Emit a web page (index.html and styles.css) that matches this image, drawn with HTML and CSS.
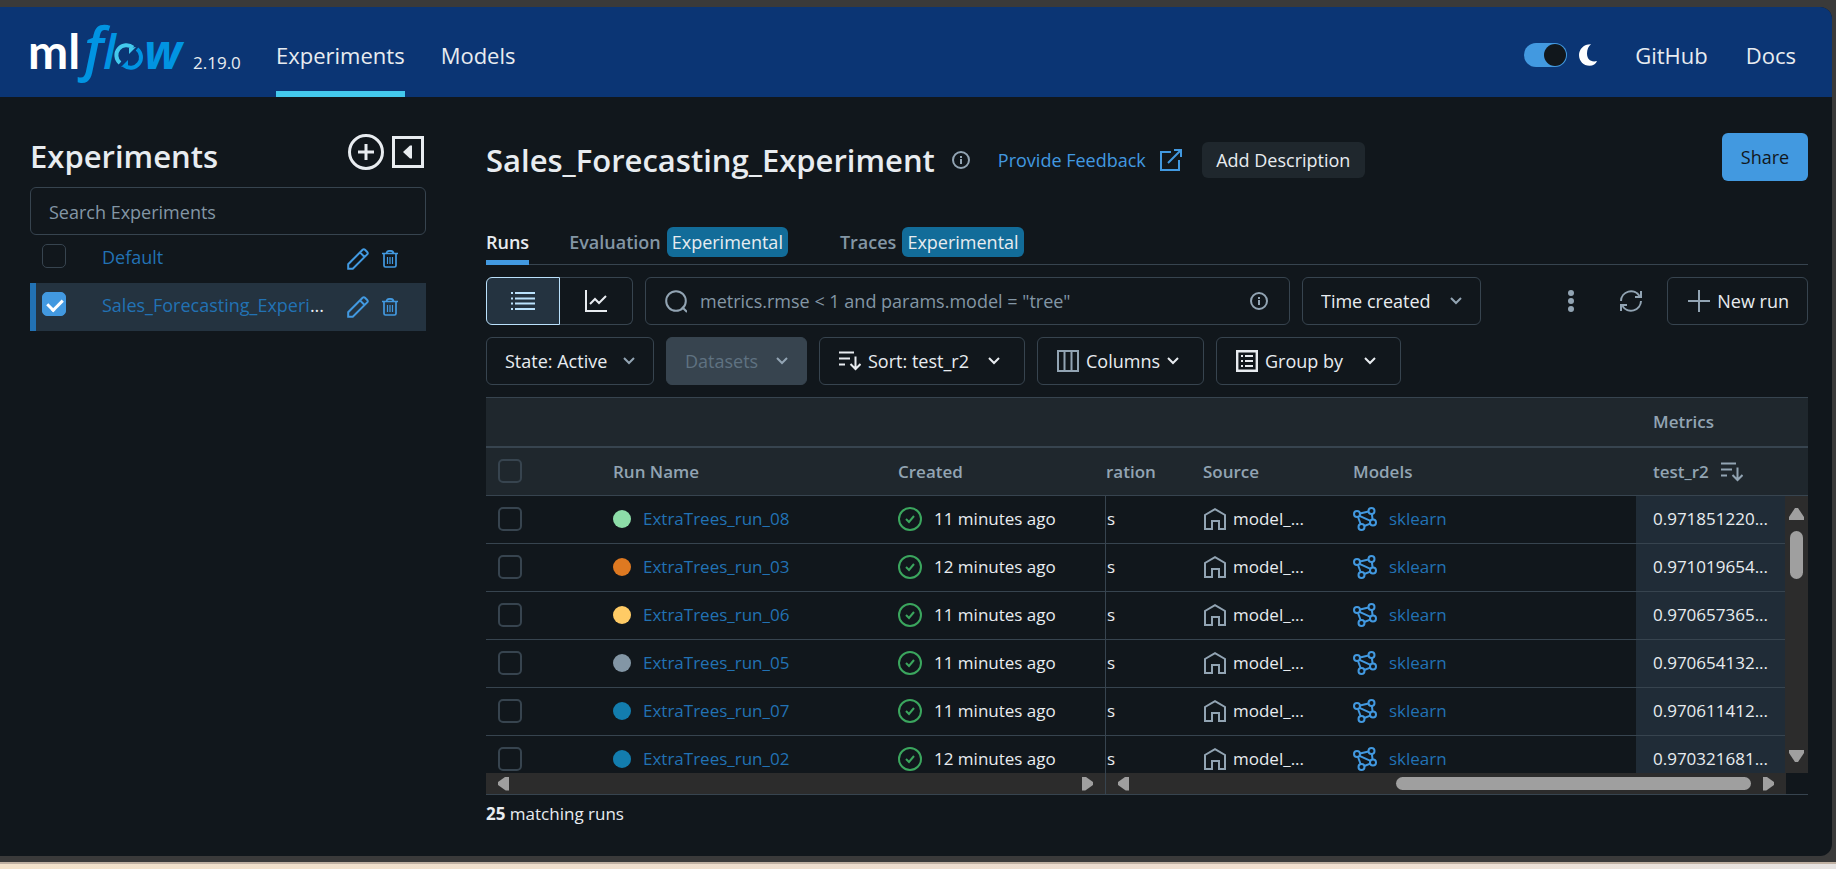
FILE: index.html
```html
<!DOCTYPE html>
<html lang="en">
<head>
<meta charset="utf-8">
<title>MLflow</title>
<link rel="stylesheet" href="styles.css">
</head>
<body>
<svg class="defs" aria-hidden="true">
  <symbol id="i-chevron" viewBox="0 0 12 8"><path d="M1 1l5 5 5-5" fill="none" stroke="currentColor" stroke-width="2"/></symbol>
  <symbol id="i-info" viewBox="0 0 18 18"><circle cx="9" cy="9" r="8" fill="none" stroke="currentColor" stroke-width="2"/><path d="M8 8h2v5H8zM8 5h2v2H8z" fill="currentColor"/></symbol>
  <symbol id="i-pencil" viewBox="0 0 22 22"><path d="M1.200 20.800v-4.600L15.600 1.800q1.200-1.200 2.400 0l2.200 2.200q1.200 1.200 0 2.400L5.800 20.800zM13 4.400l4.600 4.600" fill="none" stroke="currentColor" stroke-width="2"/></symbol>
  <symbol id="i-trash" viewBox="0 0 16 18"><path d="M0 3.500h16M4.500 3.500q0-2.700 3.500-2.700t3.500 2.700M2 4v11.500q0 1.500 1.500 1.500h9q1.500 0 1.500-1.500V4" fill="none" stroke="currentColor" stroke-width="1.700"/><path d="M5.500 7v7M8 7v7M10.500 7v7" stroke="currentColor" stroke-width="1.200"/></symbol>
  <symbol id="i-sort" viewBox="0 0 22 20"><path d="M0 1.500h15M0 7.500h11M0 13.500h6" fill="none" stroke="currentColor" stroke-width="2"/><path d="M16.500 5.500v12M11.500 13l5 5 5-5" fill="none" stroke="currentColor" stroke-width="2"/></symbol>
  <symbol id="i-check" viewBox="0 0 24 24"><circle cx="12" cy="12" r="11" fill="none" stroke="currentColor" stroke-width="2"/><path d="M8 12l3 3 5-6" fill="none" stroke="currentColor" stroke-width="2"/></symbol>
  <symbol id="i-home" viewBox="0 0 22 22"><path d="M1 21V7l10-5.800L21 7v14h-6v-8H8v8z" fill="none" stroke="currentColor" stroke-width="2"/></symbol>
  <symbol id="i-model" viewBox="0 0 24 24"><g fill="none" stroke="currentColor" stroke-width="2"><circle cx="4" cy="7" r="3"/><circle cx="18.500" cy="4" r="3"/><circle cx="20" cy="15.500" r="3"/><circle cx="8.500" cy="20" r="3"/><path d="M7 6.400l8.500-1.800M18.900 7l.7 5.500M11.300 19l6-2.400M5 10l2.600 7M6.500 8.800l11 5"/></g></symbol>
</svg>

<div class="app">
  <header class="topbar">
    <a class="logo" href="#" aria-label="mlflow">
      <svg width="160" height="90" viewBox="-4 0 160 90">
        <text class="logo-ml" x="-1" y="62">ml</text>
        <text class="logo-flow f" x="55" y="62">f</text>
        <text class="logo-flow l" x="74" y="62">l</text>
        <text class="logo-flow w" x="115" y="62">w</text>
        <g fill="none" stroke-width="4">
          <path d="M91 56a10 10 0 0 1 13-15.500" stroke="#43c9ed"/>
          <path d="M108 42a10 10 0 0 1-13 16.500" stroke="#0194e2"/>
        </g>
        <path d="M100 47v-6l7-1z" fill="#43c9ed"/>
        <path d="M99 53v6l-7 1z" fill="#0194e2"/>
      </svg>
    </a>
    <span class="version">2.19.0</span>
    <nav class="nav">
      <a class="nav-link active" href="#">Experiments</a>
      <a class="nav-link" href="#">Models</a>
    </nav>
    <div class="top-right">
      <label class="theme">
        <input type="checkbox" class="switch" aria-label="Dark mode" checked>
        <svg width="18" height="22" viewBox="0 0 18 22"><path d="M12 .2C5 0 0 5 0 11s4.500 10.800 10.500 10.800c3.500 0 6.500-1.600 7.500-4.800C12 18.500 8 15.500 8 9.500 8 5.500 9.500 2 12 .2z" fill="#fff"/></svg>
      </label>
      <a class="nav-link" href="#">GitHub</a>
      <a class="nav-link" href="#">Docs</a>
    </div>
  </header>

  <div class="layout">
    <aside class="sidebar">
      <div class="side-head">
        <h1 class="heading">Experiments</h1>
        <button class="icon-btn" aria-label="New experiment"><svg width="36" height="36" viewBox="0 0 36 36"><circle cx="18" cy="18" r="16.500" fill="none" stroke="currentColor" stroke-width="3"/><path d="M18 10v16M10 18h16" stroke="currentColor" stroke-width="3"/></svg></button>
        <button class="icon-btn" aria-label="Hide list"><svg width="32" height="32" viewBox="0 0 32 32"><path d="M1.500 1.500h29v29h-29z" fill="none" stroke="currentColor" stroke-width="3"/><path d="M20 9.500v13h-2L11 16l7-6.500z" fill="currentColor"/></svg></button>
      </div>
      <input class="search-exp" type="text" placeholder="Search Experiments" aria-label="Search Experiments">
      <ul class="exp-list">
        <li class="exp">
          <input type="checkbox" class="check" aria-label="Select Default">
          <span class="exp-name"><a class="link" href="#">Default</a></span>
          <button class="icon-btn blue" aria-label="Rename"><svg width="22" height="22"><use href="#i-pencil"/></svg></button>
          <button class="icon-btn blue" aria-label="Delete"><svg width="16" height="18"><use href="#i-trash"/></svg></button>
        </li>
        <li class="exp selected">
          <input type="checkbox" class="check" aria-label="Select Sales_Forecasting_Experiment" checked>
          <span class="exp-name"><a class="link" href="#">Sales_Forecasting_Experi</a>...</span>
          <button class="icon-btn blue" aria-label="Rename"><svg width="22" height="22"><use href="#i-pencil"/></svg></button>
          <button class="icon-btn blue" aria-label="Delete"><svg width="16" height="18"><use href="#i-trash"/></svg></button>
        </li>
      </ul>
    </aside>

    <main class="main">
      <div class="title-row">
        <h2 class="heading">Sales_Forecasting_Experiment</h2>
        <button class="icon-btn muted info" aria-label="Info"><svg width="18" height="18"><use href="#i-info"/></svg></button>
        <a class="feedback" href="#">Provide Feedback
          <svg width="22" height="22" viewBox="0 0 22 22"><path d="M11 3H1v18h18V11M8 14L20.500 1.500M14 1h7v7" fill="none" stroke="currentColor" stroke-width="2"/></svg>
        </a>
        <button class="add-desc">Add Description</button>
        <button class="share">Share</button>
      </div>

      <nav class="tabs">
        <a class="tab active" href="#">Runs</a>
        <a class="tab" href="#">Evaluation <span class="badge">Experimental</span></a>
        <a class="tab" href="#">Traces <span class="badge">Experimental</span></a>
      </nav>

      <div class="toolbar">
        <div class="segment">
          <button class="seg on" aria-label="Table view"><svg width="24" height="18" viewBox="0 0 24 18"><path d="M0 1h2m2 0h20M0 6.500h2m2 0h20M0 11.500h2m2 0h20M0 17h2m2 0h20" stroke="currentColor" stroke-width="2"/></svg></button>
          <button class="seg" aria-label="Chart view"><svg width="22" height="22" viewBox="0 0 22 22"><path d="M1 0v21h21M5 14l5-5 4 4 7-7" fill="none" stroke="currentColor" stroke-width="2"/></svg></button>
        </div>
        <label class="search-runs">
          <svg width="22" height="23" viewBox="0 0 22 23"><circle cx="11" cy="11" r="9.800" fill="none" stroke="currentColor" stroke-width="2"/><path d="M17 17l5 5" stroke="currentColor" stroke-width="2"/></svg>
          <input type="text" placeholder='metrics.rmse &lt; 1 and params.model = "tree"' aria-label="Search runs">
          <svg width="18" height="18"><use href="#i-info"/></svg>
        </label>
        <label class="box dim-arrow time">
          <select aria-label="Time created"><option>Time created</option></select>
          <svg width="12" height="8"><use href="#i-chevron"/></svg>
        </label>
        <div class="tool-right">
          <button class="icon-btn muted" aria-label="More"><svg width="6" height="22" viewBox="0 0 6 22"><g fill="currentColor"><circle cx="3" cy="3" r="3"/><circle cx="3" cy="11" r="3"/><circle cx="3" cy="19" r="3"/></g></svg></button>
          <button class="icon-btn muted refresh" aria-label="Refresh"><svg width="22" height="22" viewBox="0 0 22 22"><path d="M1 11A10 10 0 0 1 19.500 6M21 11A10 10 0 0 1 2.500 16M21 1v6h-6M1 21v-6h6" fill="none" stroke="currentColor" stroke-width="2"/></svg></button>
          <button class="box new-run"><svg class="muted" width="22" height="22" viewBox="0 0 22 22"><path d="M11 0v22M0 11h22" stroke="currentColor" stroke-width="2"/></svg>New run</button>
        </div>
      </div>

      <div class="toolbar">
        <label class="box dim-arrow state">
          <select aria-label="State"><option>State: Active</option></select>
          <svg width="12" height="8"><use href="#i-chevron"/></svg>
        </label>
        <button class="box dim-arrow datasets" disabled>Datasets<svg width="12" height="8"><use href="#i-chevron"/></svg></button>
        <button class="box sort"><svg width="22" height="20"><use href="#i-sort"/></svg><span>Sort: test_r2</span><svg width="12" height="8"><use href="#i-chevron"/></svg></button>
        <button class="box columns"><svg class="muted" width="22" height="22" viewBox="0 0 22 22"><path d="M1 1h20v20H1zM7.500 1v20M14.500 1v20" fill="none" stroke="currentColor" stroke-width="2"/></svg><span>Columns</span><svg width="12" height="8"><use href="#i-chevron"/></svg></button>
        <button class="box group"><svg width="22" height="22" viewBox="0 0 22 22"><path d="M1.200 1.200h19.600v19.600H1.200z" fill="none" stroke="currentColor" stroke-width="2.400"/><path d="M5 6h2m2 0h8M5 11h2m2 0h8M5 16h2m2 0h8" stroke="currentColor" stroke-width="2"/></svg><span>Group by</span><svg width="12" height="8"><use href="#i-chevron"/></svg></button>
      </div>

      <div class="grid">
        <div class="grid-view">
          <table class="runs">
            <colgroup><col class="c-check"><col class="c-name"><col class="c-created"><col class="c-dur"><col class="c-source"><col><col class="c-metric"><col class="c-bar"></colgroup>
            <thead>
              <tr class="groups"><th colspan="6"></th><th colspan="2" class="metric">Metrics</th></tr>
              <tr class="heads">
                <th class="sel"><input type="checkbox" class="check" aria-label="Select all"></th>
                <th>Run Name</th><th>Created</th><th class="dur">ration</th><th>Source</th><th>Models</th>
                <th class="metric" colspan="2"><span class="cell">test_r2 <svg width="22" height="20"><use href="#i-sort"/></svg></span></th>
              </tr>
            </thead>
            <tbody id="rows"></tbody>
          </table>
          <div class="vbar"><i class="arrow up"></i><i class="vthumb"></i><i class="arrow down"></i></div>
        </div>
        <div class="hbars">
          <div class="hbar left"><i class="arrow prev"></i><i class="arrow next"></i></div>
          <div class="hbar right"><i class="arrow prev"></i><i class="hthumb"></i><i class="arrow next"></i></div>
        </div>
      </div>
      <p class="count"><b>25</b> matching runs</p>
    </main>
  </div>
</div>
<div class="desktop"></div>
<script src="runs.js"></script>
</body>
</html>
```

FILE: runs.js
```js
const runs = [
  ['08', '#8ddda8', 11, '0.971851220...'],
  ['03', '#de7921', 12, '0.971019654...'],
  ['06', '#ffcb65', 11, '0.970657365...'],
  ['05', '#8396a5', 11, '0.970654132...'],
  ['07', '#137dae', 11, '0.970611412...'],
  ['02', '#137dae', 12, '0.970321681...']
];
document.getElementById('rows').innerHTML = runs.map(([id, color, mins, r2]) => `
  <tr>
    <td class="sel"><input type="checkbox" class="check" aria-label="Select ExtraTrees_run_${id}"></td>
    <td><span class="cell run"><i class="dot" style="background:${color}"></i><a class="link" href="#">ExtraTrees_run_${id}</a></span></td>
    <td><span class="cell run"><svg class="ok" width="24" height="24"><use href="#i-check"/></svg>${mins} minutes ago</span></td>
    <td class="dur">s</td>
    <td><span class="cell source"><svg class="muted" width="22" height="22"><use href="#i-home"/></svg>model_...</span></td>
    <td><span class="cell run"><svg class="model" width="24" height="24"><use href="#i-model"/></svg><a class="link" href="#">sklearn</a></span></td>
    <td class="metric" colspan="2">${r2}</td>
  </tr>`).join('');
```

FILE: styles.css
```css
* { box-sizing: border-box; }
body {
  margin: 0;
  min-height: 100vh;
  display: flex;
  flex-direction: column;
  padding-top: 7px;
  background: #3a3a3a;
  color: #e8ecf0;
  font: 18px/24px "Open Sans", "Noto Sans", sans-serif;
}
button, input, select { font: inherit; color: inherit; }
button, select { cursor: pointer; }
a { text-decoration: none; }
svg { display: block; flex: none; }
.defs { position: absolute; width: 0; height: 0; }
.muted { color: #92a4b3; }
.link { color: #2272b4; }

.app {
  flex: 1;
  margin: 0 4px 6px 0;
  background: #11171c;
  border-radius: 0 12px 12px 0;
  overflow: hidden;
}
.desktop {
  height: 7px;
  border-top: 2px solid #bfb0a2;
  background: linear-gradient(90deg, #f3e2cb, #ecdccf 60%, #f3e0cf 70%, #e6e3e2);
}

.topbar {
  height: 90px;
  display: flex;
  background: #0b3574;
  padding: 0 36px 0 25px;
}
.logo text { font-family: Lato, sans-serif; }
.logo .logo-ml { font-size: 48px; font-weight: 700; fill: #fff; }
.logo .logo-flow { font-family: "Open Sans", sans-serif; font-style: italic; font-weight: 600; fill: #0194e2; }
.logo .f { font-size: 57px; }
.logo .l { font-size: 47px; }
.logo .w { font-size: 48px; font-weight: 700; }
.version { width: 55px; padding: 44px 0 0 8px; font-size: 17px; }
.nav { display: flex; gap: 36px; margin-left: 36px; }
.nav-link {
  display: flex;
  align-items: center;
  padding-top: 12px;
  color: #e8ecf0;
  font-size: 22px;
  border-bottom: 6px solid transparent;
}
.nav-link.active { border-color: #43c9ed; }
.top-right { display: flex; gap: 38px; margin-left: auto; }
.theme { display: flex; align-items: center; gap: 12px; }
.theme svg { margin-top: 6px; }
.switch {
  appearance: none;
  width: 43px;
  height: 24px;
  margin: 6px 0 0;
  padding: 1px;
  border-radius: 12px;
  background: #4299e0;
  display: flex;
  justify-content: flex-end;
}
.switch::before { content: ""; width: 22px; height: 22px; border-radius: 50%; background: #11171c; }

.layout { display: flex; gap: 60px; padding: 36px 24px 0 30px; }
.sidebar { width: 396px; flex: none; }
.main { flex: 1; min-width: 0; }
.heading { margin: 0; font-size: 31px; line-height: 48px; font-weight: 600; }
.icon-btn { display: block; padding: 0; border: 0; background: none; }
.blue { color: #4299e0; }

.side-head { display: flex; align-items: center; gap: 8px; height: 54px; padding-right: 2px; }
.side-head .heading { margin: 0 auto 8px 0; }
.side-head .icon-btn { margin-bottom: 16px; }
.search-exp {
  display: block;
  width: 100%;
  height: 48px;
  padding: 1px 18px 0;
  border: 1px solid #37444f;
  border-radius: 6px;
  background: none;
}
::placeholder { color: #8396a5; opacity: 1; }
.exp-list { list-style: none; margin: 0; padding: 0; }
.exp {
  display: flex;
  align-items: center;
  height: 48px;
  padding: 0 28px 0 6px;
  border-left: 6px solid transparent;
}
.exp.selected { background: #243340; border-color: #2272b4; }
.exp-name { flex: 1; padding: 0 0 4px 36px; white-space: nowrap; }
.exp .icon-btn { margin-left: 13px; }
.check {
  appearance: none;
  flex: none;
  display: block;
  width: 24px;
  height: 24px;
  margin: 0;
  border: 2px solid #37444f;
  border-radius: 5px;
}
.exp .check { margin-bottom: 6px; border-width: 1px; }
.exp .check:checked { border-color: #4299e0; background: #4299e0; }
.check:checked::before {
  content: "";
  display: block;
  width: 7px;
  height: 12px;
  margin: 3px 0 0 7px;
  border: solid #fff;
  border-width: 0 3px 3px 0;
  transform: rotate(45deg);
}

.title-row { display: flex; align-items: center; height: 48px; padding-top: 5px; }
.info { margin-left: 17px; }
.feedback { display: flex; gap: 14px; margin-left: 28px; color: #4299e0; align-items: center; white-space: nowrap; }
.add-desc { width: 163px; height: 36px; margin-left: 20px; padding: 0; border: 0; border-radius: 6px; background: #1f272d; }
.share { width: 86px; height: 48px; margin: 0 0 5px auto; padding: 0; border: 0; border-radius: 6px; background: #4299e0; color: #11171c; }

.tabs { display: flex; height: 46px; margin: 38px 0 12px; border-bottom: 1px solid #37444f; font-weight: 600; }
.tab { display: flex; align-items: center; gap: 6px; height: 46px; padding-top: 4px; margin-right: 40px; color: #8396a5; border-bottom: 5px solid transparent; }
.tab:nth-child(2) { margin-right: 52px; }
.tab.active { color: #e8ecf0; border-color: #4299e0; }
.badge { height: 30px; padding: 0 5px; border-radius: 6px; background: #126c99; color: #e8ecf0; line-height: 30px; font-weight: 400; }

.toolbar { display: flex; gap: 12px; margin-bottom: 12px; }
.segment { display: flex; width: 147px; }
.seg {
  flex: 1;
  height: 48px;
  display: flex;
  align-items: center;
  justify-content: center;
  background: none;
  border: 1px solid #37444f;
  border-left: 0;
  border-radius: 0 6px 6px 0;
}
.seg.on { border: 1px solid #bae1fc; border-radius: 6px 0 0 6px; background: #243340; color: #bae1fc; }
.search-runs {
  flex: 0 1 645px;
  display: flex;
  align-items: center;
  gap: 13px;
  padding: 0 21px 0 19px;
  border: 1px solid #37444f;
  border-radius: 6px;
  color: #92a4b3;
}
.search-runs input { flex: 1; min-width: 0; padding: 0; border: 0; background: none; }
.box {
  display: flex;
  align-items: center;
  gap: 7px;
  height: 48px;
  padding: 0 18px;
  border: 1px solid #37444f;
  border-radius: 6px;
  background: none;
  white-space: nowrap;
}
.box select { appearance: none; flex: 1; padding: 0; border: 0; background: none; }
.box > svg:last-child { margin-left: auto; }
.dim-arrow > svg { color: #92a4b3; }
.time { width: 179px; }
.state { width: 168px; }
.datasets { width: 141px; background: #37444f; color: #5f7281; }
.sort { width: 206px; padding: 0 24px 0 19px; }
.columns { width: 167px; padding: 0 24px 0 19px; }
.group { width: 185px; padding: 0 24px 0 19px; }
.tool-right { display: flex; align-items: center; gap: 46px; margin-left: auto; }
.refresh { margin-right: -21px; }
.new-run { width: 141px; padding-left: 19px; }

.grid { border-bottom: 1px solid #37444f; }
.grid-view { position: relative; height: 376px; overflow: hidden; }
.runs { width: 100%; table-layout: fixed; border-collapse: separate; border-spacing: 0; font-size: 17px; text-align: left; }
.c-check { width: 127px; }
.c-name { width: 285px; }
.c-created { width: 207px; }
.c-dur { width: 98px; }
.c-source { width: 150px; }
.c-metric { width: 149px; }
.c-bar { width: 23px; }
.runs th, .runs td { padding: 0; height: 48px; border-bottom: 1px solid #37444f; white-space: nowrap; }
.runs td { padding-bottom: 1px; }
.runs th { background: #1f272d; color: #92a4b3; font-weight: 600; }
.runs .groups th { height: 51px; border-top: 1px solid #37444f; border-bottom-width: 2px; }
.runs .sel { padding: 0 0 1px 12px; }
.runs .dur { padding-left: 1px; }
.runs td.dur { border-left: 1px solid #37444f; }
.runs .metric { padding-left: 17px; }
.runs td.metric { background: #202c37; }
.cell { display: flex; align-items: center; gap: 12px; }
.runs .source { gap: 7px; padding-left: 1px; }
.dot { width: 18px; height: 18px; border-radius: 50%; }
.ok { color: #3ba65e; }
.model { color: #4299e0; }

.vbar, .hbar { background: #2c2c2c; display: flex; align-items: center; }
.vbar { position: absolute; right: 0; top: 99px; bottom: 0; width: 23px; flex-direction: column; padding: 12px 0 11px; }
.vthumb { width: 13px; height: 48px; margin-top: 11px; border-radius: 7px; background: #9f9f9f; }
.vbar .down { margin-top: auto; }
.hbars { display: flex; padding-right: 22px; }
.hbar { height: 21px; justify-content: space-between; padding: 0 12px; }
.hbar.left { width: 619px; }
.hbar.right { flex: 1; border-left: 1px solid #37444f; }
.hthumb { width: 355px; height: 13px; margin: 0 12px 0 auto; border-radius: 7px; background: #9f9f9f; }
.arrow { width: 11px; height: 14px; background: #9f9f9f; }
.prev { clip-path: polygon(100% 0, 100% 100%, 70% 100%, 0 60%, 0 40%, 70% 0); }
.next { clip-path: polygon(0 0, 30% 0, 100% 40%, 100% 60%, 30% 100%, 0 100%); }
.arrow.up, .arrow.down { width: 15px; height: 12px; }
.up { clip-path: polygon(40% 0, 60% 0, 100% 75%, 100% 100%, 0 100%, 0 75%); }
.down { clip-path: polygon(0 0, 100% 0, 100% 25%, 60% 100%, 40% 100%, 0 25%); }
.count { margin: 7px 0 0; font-size: 17px; }
```
